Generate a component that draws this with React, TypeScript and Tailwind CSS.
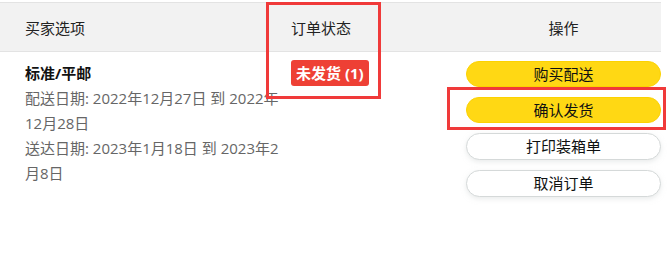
const font = { fontFamily: '"Open Sans", "Noto Sans CJK SC", sans-serif' }

function ActionButton({ label, primary = false }: { label: string; primary?: boolean }) {
  return (
    <button
      className={
        primary
          ? 'h-[26px] w-full rounded-full border border-[#FCD200] bg-[#FFD814] text-[15px] leading-none text-[#0F1111]'
          : 'h-[27px] w-full rounded-full border border-[#D5D9D9] bg-white text-[15px] leading-none text-[#0F1111] shadow-[0_2px_5px_rgba(213,217,217,0.5)]'
      }
    >
      {label}
    </button>
  )
}

export default function App() {
  return (
    <div className="relative h-[269px] w-[669px] overflow-hidden bg-white" style={font}>
      <div className="w-[661px] pt-[2px]">
        {/* Header */}
        <div className="grid h-[50px] grid-cols-[291px_175px_195px] items-center border-y border-[#e3e3e3] bg-[#f2f2f2] pt-[3px] text-[15px] text-[#222]">
          <div className="pl-[25px]">买家选项</div>
          <div>订单状态</div>
          <div className="text-center">操作</div>
        </div>

        {/* Row */}
        <div className="grid grid-cols-[291px_175px_195px]">
          <div className="pl-[25px] pr-[4px] pt-[9px] text-[15px] leading-[25px]">
            <div className="font-bold text-[#111]">标准/平邮</div>
            <div className="text-[#666]">配送日期: 2022年12月27日 到 2022年12月28日</div>
            <div className="text-[#666]">送达日期: 2023年1月18日 到 2023年2月8日</div>
          </div>
          <div className="pt-[8px]">
            <span className="inline-flex h-[26px] items-center rounded-[3px] bg-[#ee4035] px-[5px] text-[15px] font-bold text-white">
              未发货 (1)
            </span>
          </div>
          <div className="flex flex-col gap-[10px] pt-[9px]">
            <ActionButton label="购买配送" primary />
            <ActionButton label="确认发货" primary />
            <ActionButton label="打印装箱单" />
            <ActionButton label="取消订单" />
          </div>
        </div>
      </div>

      {/* annotation boxes */}
      <div className="absolute left-[266px] top-[2px] h-[97px] w-[115px] border-[3px] border-[#f03a3a]" />
      <div className="absolute left-[447px] top-[87px] h-[43px] w-[219px] border-[3px] border-[#f03a3a]" />
    </div>
  )
}
